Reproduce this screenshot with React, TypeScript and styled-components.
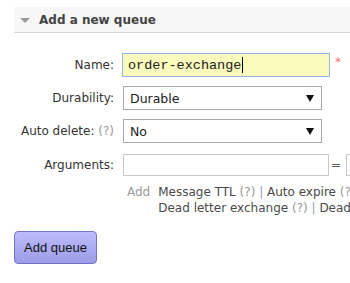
import React from 'react';
import styled, { createGlobalStyle } from 'styled-components';

const GlobalStyle = createGlobalStyle`
  html, body {
    margin: 0;
    padding: 0;
    background: #fff;
    overflow: hidden;
  }
  body {
    font-family: 'DejaVu Sans', Verdana, sans-serif;
    font-size: 12px;
    color: #484848;
  }
`;

const Page = styled.div`
  padding: 7px 0 0 14px;
  width: 336px;
`;

const SectionHeader = styled.div`
  display: flex;
  align-items: center;
  gap: 9px;
  height: 25px;
  padding-left: 6px;
  background: #f7f7f7;
  border-bottom: 1px solid #d6d6d6;
  font-weight: bold;
  font-size: 12px;
  color: #444;
  white-space: nowrap;
`;

const Arrow = styled.span`
  width: 0;
  height: 0;
  border-left: 5px solid transparent;
  border-right: 5px solid transparent;
  border-top: 5px solid #9a9a9a;
  margin-top: 1px;
`;

const Form = styled.form`
  display: grid;
  grid-template-columns: 100px 1fr;
  column-gap: 8px;
  row-gap: 9px;
  align-items: center;
  padding-top: 20px;
`;

const Label = styled.label<{ $shift?: number }>`
  text-align: right;
  color: #333;
  white-space: nowrap;
  margin-top: ${(p) => p.$shift ?? 0}px;
`;

const Hint = styled.span`
  color: #999;
`;

const Field = styled.div<{ $shift?: number }>`
  display: flex;
  align-items: center;
  white-space: nowrap;
  margin-top: ${(p) => p.$shift ?? 0}px;
`;

const NameBox = styled.div`
  box-sizing: border-box;
  width: 208px;
  height: 24px;
  display: flex;
  align-items: center;
  padding-left: 5px;
  border: 1px solid #98b5ea;
  background: #fafabd;
  font-family: 'Liberation Mono', 'Courier New', monospace;
  font-size: 13.5px;
  color: #222;
`;

const Caret = styled.span`
  display: inline-block;
  width: 1px;
  height: 16px;
  background: #000;
  margin-left: 1px;
`;

const Required = styled.span`
  color: #f07070;
  font-size: 12px;
  align-self: flex-start;
  margin-top: 2px;
  margin-left: 5px;
`;

const SelectBox = styled.div`
  box-sizing: border-box;
  width: 199px;
  height: 24px;
  margin-left: 1px;
  display: flex;
  align-items: center;
  justify-content: space-between;
  padding: 0 7px 0 6px;
  border: 1px solid #a9a9a9;
  background: #fff;
  color: #222;
  font-size: 12.5px;
`;

const SelectArrow = styled.span`
  width: 0;
  height: 0;
  border-left: 4px solid transparent;
  border-right: 4px solid transparent;
  border-top: 7px solid #111;
`;

const TextInput = styled.input<{ $w: number }>`
  box-sizing: border-box;
  width: ${(p) => p.$w}px;
  height: 22px;
  margin: 0 0 0 1px;
  padding: 0;
  border: 1px solid #c8c8c8;
  background: #fff;
  flex-shrink: 0;
`;

const Equals = styled.span`
  color: #555;
  margin: 0 4px 0 2px;
`;

const HelpRow = styled.div`
  grid-column: 2;
  display: flex;
  gap: 8px;
  margin-top: -1px;
  padding-left: 5px;
  line-height: 16px;
  white-space: nowrap;
`;

const AddWord = styled.span`
  color: #9a9a9a;
`;

const Links = styled.div`
  display: flex;
  flex-direction: column;
  color: #4a4a4a;
`;

const Sep = styled.span`
  color: #8d9cc0;
`;

const Button = styled.button`
  margin-top: 15px;
  width: 83px;
  height: 33px;
  border: 1px solid #7474c4;
  border-radius: 4px;
  background: linear-gradient(#bcbcfb, #9c9ce8);
  font-family: 'Liberation Sans', Arial, sans-serif;
  font-size: 13px;
  color: #111;
  padding: 0;
`;

const q = <Hint>(?)</Hint>;

export default function App() {
  return (
    <>
      <GlobalStyle />
      <Page>
        <SectionHeader>
          <Arrow />
          Add a new queue
        </SectionHeader>
        <Form onSubmit={(e) => e.preventDefault()}>
          <Label>Name:</Label>
          <Field>
            <NameBox>
              order-exchange
              <Caret />
            </NameBox>
            <Required>*</Required>
          </Field>

          <Label>Durability:</Label>
          <SelectBox>
            Durable
            <SelectArrow />
          </SelectBox>

          <Label>Auto delete: {q}</Label>
          <SelectBox>
            No
            <SelectArrow />
          </SelectBox>

          <Label $shift={2}>Arguments:</Label>
          <Field $shift={2}>
            <TextInput $w={206} />
            <Equals>=</Equals>
            <TextInput $w={100} />
          </Field>

          <HelpRow>
            <AddWord>Add</AddWord>
            <Links>
              <span>
                Message TTL {q} <Sep>|</Sep> Auto expire {q} <Sep>|</Sep> Max length {q}
              </span>
              <span>
                Dead letter exchange {q} <Sep>|</Sep> Dead letter routing key {q}
              </span>
            </Links>
          </HelpRow>
        </Form>
        <Button>Add queue</Button>
      </Page>
    </>
  );
}
